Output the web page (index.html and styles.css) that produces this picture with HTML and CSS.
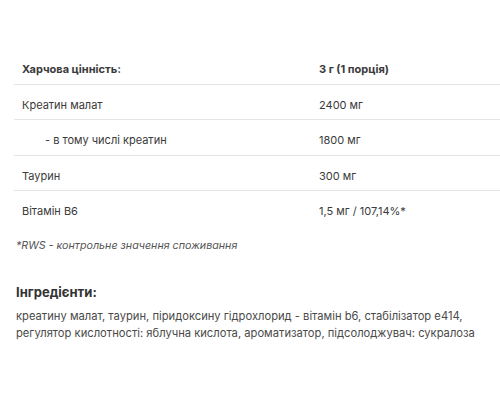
FILE: index.html
```html
<!DOCTYPE html>
<html lang="uk">
  <head>
    <meta charset="UTF-8" />
    <meta name="viewport" content="width=device-width, initial-scale=1.0" />
    <title>Склад</title>
    <link rel="stylesheet" href="styles.css">
  </head>
  <body>
    <div class="product-info">
      <table class="nutrition">
        <tr class="nutrition-head">
          <td>Харчова цінність:</td>
          <td>3 г (1 порція)</td>
        </tr>
        <tr>
          <td>Креатин малат</td>
          <td>2400 мг</td>
        </tr>
        <tr>
          <td class="sub-item">- в тому числі креатин</td>
          <td>1800 мг</td>
        </tr>
        <tr>
          <td>Таурин</td>
          <td>300 мг</td>
        </tr>
        <tr>
          <td>Вітамін B6</td>
          <td>1,5 мг / 107,14%*</td>
        </tr>
      </table>

      <p class="footnote">*RWS - контрольне значення споживання</p>

      <div class="ingredients">
        <h3>Інгредієнти:</h3>
        <p>
          креатину малат, таурин, піридоксину гідрохлорид - вітамін b6, стабілізатор e414,
          регулятор кислотності: яблучна кислота, ароматизатор, підсолоджувач: сукралоза
        </p>
      </div>
    </div>
  </body>
</html>
```

FILE: styles.css
```css
body {
  margin: 0;
  font-family: Inter, "Noto Sans", sans-serif;
  background-color: #ffffff;
  color: #3a3a3a;
}

.product-info {
  padding: 49px 0 0 14px;
}

.nutrition {
  width: 486px;
  table-layout: fixed;
  border-collapse: collapse;
  font-size: 11px;
  line-height: 14px;
}

.nutrition td {
  padding: 13px 0 7.5px 8px;
  border-bottom: 1px solid #e2e5e8;
  vertical-align: top;
}

.nutrition td:first-child {
  width: 289px;
}

.nutrition tr:last-child td {
  border-bottom: none;
}

.nutrition-head td {
  font-weight: 700;
}

.sub-item {
  padding-left: 31px !important;
}

.footnote {
  margin: 13px 0 0 2px;
  font-size: 10.7px;
  font-style: italic;
  color: #555;
}

.ingredients {
  margin: 0 0 0 2px;
}

.ingredients h3 {
  margin: 32px 0 8px;
  font-size: 13px;
  font-weight: 700;
  color: #333;
}

.ingredients p {
  margin: 0;
  font-size: 11.2px;
  line-height: 17px;
  color: #4a4a4a;
}
```
